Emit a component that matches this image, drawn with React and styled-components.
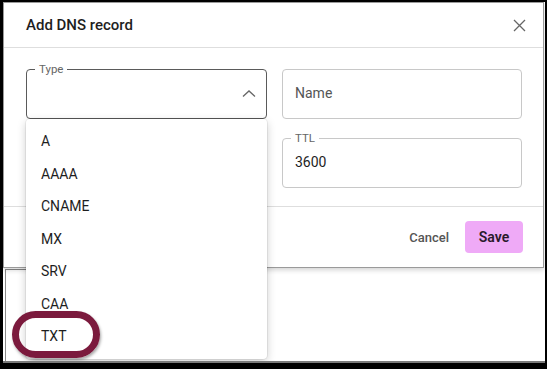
import React from 'react';
import styled, { createGlobalStyle } from 'styled-components';

const GlobalStyle = createGlobalStyle`
  html, body {
    margin: 0;
    padding: 0;
    background: #000;
  }
  body {
    font-family: Roboto, "Liberation Sans", Arial, sans-serif;
    color: #222;
  }
`;

const Frame = styled.div`
  position: relative;
  width: 542px;
  height: 359px;
  margin: 2px 2px 0 3px;
  background: #fff;
  border-bottom: 2px solid #7a7a7a;
  overflow: hidden;
`;

const Dialog = styled.div`
  position: relative;
  width: 539px;
  background: #fff;
  border: 1px solid #9a9a9a;
  box-shadow: 0 2px 5px rgba(0, 0, 0, 0.18);
  z-index: 2;
`;

const Header = styled.div`
  height: 44px;
  display: flex;
  align-items: center;
  justify-content: space-between;
  padding: 0 14px 0 22px;
  border-bottom: 1px solid #dedede;
`;

const Title = styled.h2`
  margin: 0;
  font-size: 15px;
  font-weight: 500;
  color: #1e1e1e;
`;

const CloseButton = styled.button`
  display: flex;
  align-items: center;
  justify-content: center;
  width: 20px;
  height: 20px;
  padding: 0;
  border: none;
  background: none;
  color: #666;
  cursor: pointer;
`;

const Body = styled.div`
  display: grid;
  grid-template-columns: 241px 240px;
  column-gap: 15px;
  row-gap: 19px;
  padding: 21px 21px 18px 22px;
  border-bottom: 1px solid #dedede;
`;

const Field = styled.div`
  position: relative;
  height: 50px;
  box-sizing: border-box;
  border: 1px solid ${(p) => (p.$active ? '#5a5a5a' : '#c8c8c8')};
  border-radius: 4px;
  display: flex;
  align-items: center;
  padding: 0 12px 3px;
  font-size: 14px;
  color: ${(p) => (p.$placeholder ? '#555' : '#1e1e1e')};
`;

const FloatLabel = styled.span`
  position: absolute;
  top: -8px;
  left: 8px;
  padding: 0 4px;
  background: #fff;
  font-size: 11.5px;
  line-height: 14px;
  color: #666;
`;

const Chevron = styled.svg`
  position: absolute;
  right: 10px;
  top: 19px;
`;

const Menu = styled.ul`
  position: absolute;
  top: calc(100% + 1px);
  left: -1px;
  width: 241px;
  height: 240px;
  box-sizing: border-box;
  margin: 0;
  padding: 6px 0;
  list-style: none;
  background: #fff;
  border-radius: 4px;
  box-shadow: 0 3px 10px rgba(0, 0, 0, 0.2), 0 0 0 1px rgba(0, 0, 0, 0.06);
  z-index: 5;
`;

const MenuItem = styled.li`
  height: 32.5px;
  display: flex;
  align-items: center;
  padding: 0 15px;
  font-size: 14px;
  color: #1e1e1e;
`;

const Footer = styled.div`
  display: flex;
  justify-content: flex-end;
  align-items: center;
  gap: 8px;
  padding: 14px 20px 14px 22px;
`;

const TextButton = styled.button`
  height: 32px;
  padding: 0 8px;
  border: none;
  background: none;
  font-family: inherit;
  font-size: 13px;
  font-weight: 500;
  color: #555;
  cursor: pointer;
`;

const SaveButton = styled.button`
  width: 58px;
  height: 32px;
  border: none;
  border-radius: 4px;
  background: #efaaf7;
  font-family: inherit;
  font-size: 14px;
  font-weight: 600;
  color: #2a1a2c;
  cursor: pointer;
`;

const PageBox = styled.div`
  width: 120px;
  height: 120px;
  margin: 1px 0 0 2px;
  border-top: 1px solid #8a8a8a;
  border-left: 1px solid #8a8a8a;
`;

const Highlight = styled.div`
  position: absolute;
  left: 9px;
  top: 309px;
  width: 88px;
  height: 47px;
  box-sizing: border-box;
  border: 7px solid #7b1a3d;
  border-radius: 24px;
  box-shadow: 1px 2px 3px rgba(0, 0, 0, 0.35);
  z-index: 10;
`;

const types = ['A', 'AAAA', 'CNAME', 'MX', 'SRV', 'CAA', 'TXT'];

const App = () => {
  return (
    <Frame>
      <GlobalStyle />
      <Dialog>
        <Header>
          <Title>Add DNS record</Title>
          <CloseButton aria-label="Close">
            <svg width="13" height="13" viewBox="0 0 13 13">
              <path d="M1 1 L12 12 M12 1 L1 12" stroke="currentColor" strokeWidth="1.3" />
            </svg>
          </CloseButton>
        </Header>
        <Body>
          <Field $active>
            <FloatLabel>Type</FloatLabel>
            <Chevron width="14" height="9" viewBox="0 0 14 9">
              <polyline points="1,7.5 7,2 13,7.5" fill="none" stroke="#666" strokeWidth="1.3" />
            </Chevron>
            <Menu>
              {types.map((t) => (
                <MenuItem key={t}>{t}</MenuItem>
              ))}
            </Menu>
          </Field>
          <Field $placeholder>Name</Field>
          <div />
          <Field>
            <FloatLabel>TTL</FloatLabel>
            3600
          </Field>
        </Body>
        <Footer>
          <TextButton>Cancel</TextButton>
          <SaveButton>Save</SaveButton>
        </Footer>
      </Dialog>
      <PageBox />
      <Highlight />
    </Frame>
  );
};

export default App;
